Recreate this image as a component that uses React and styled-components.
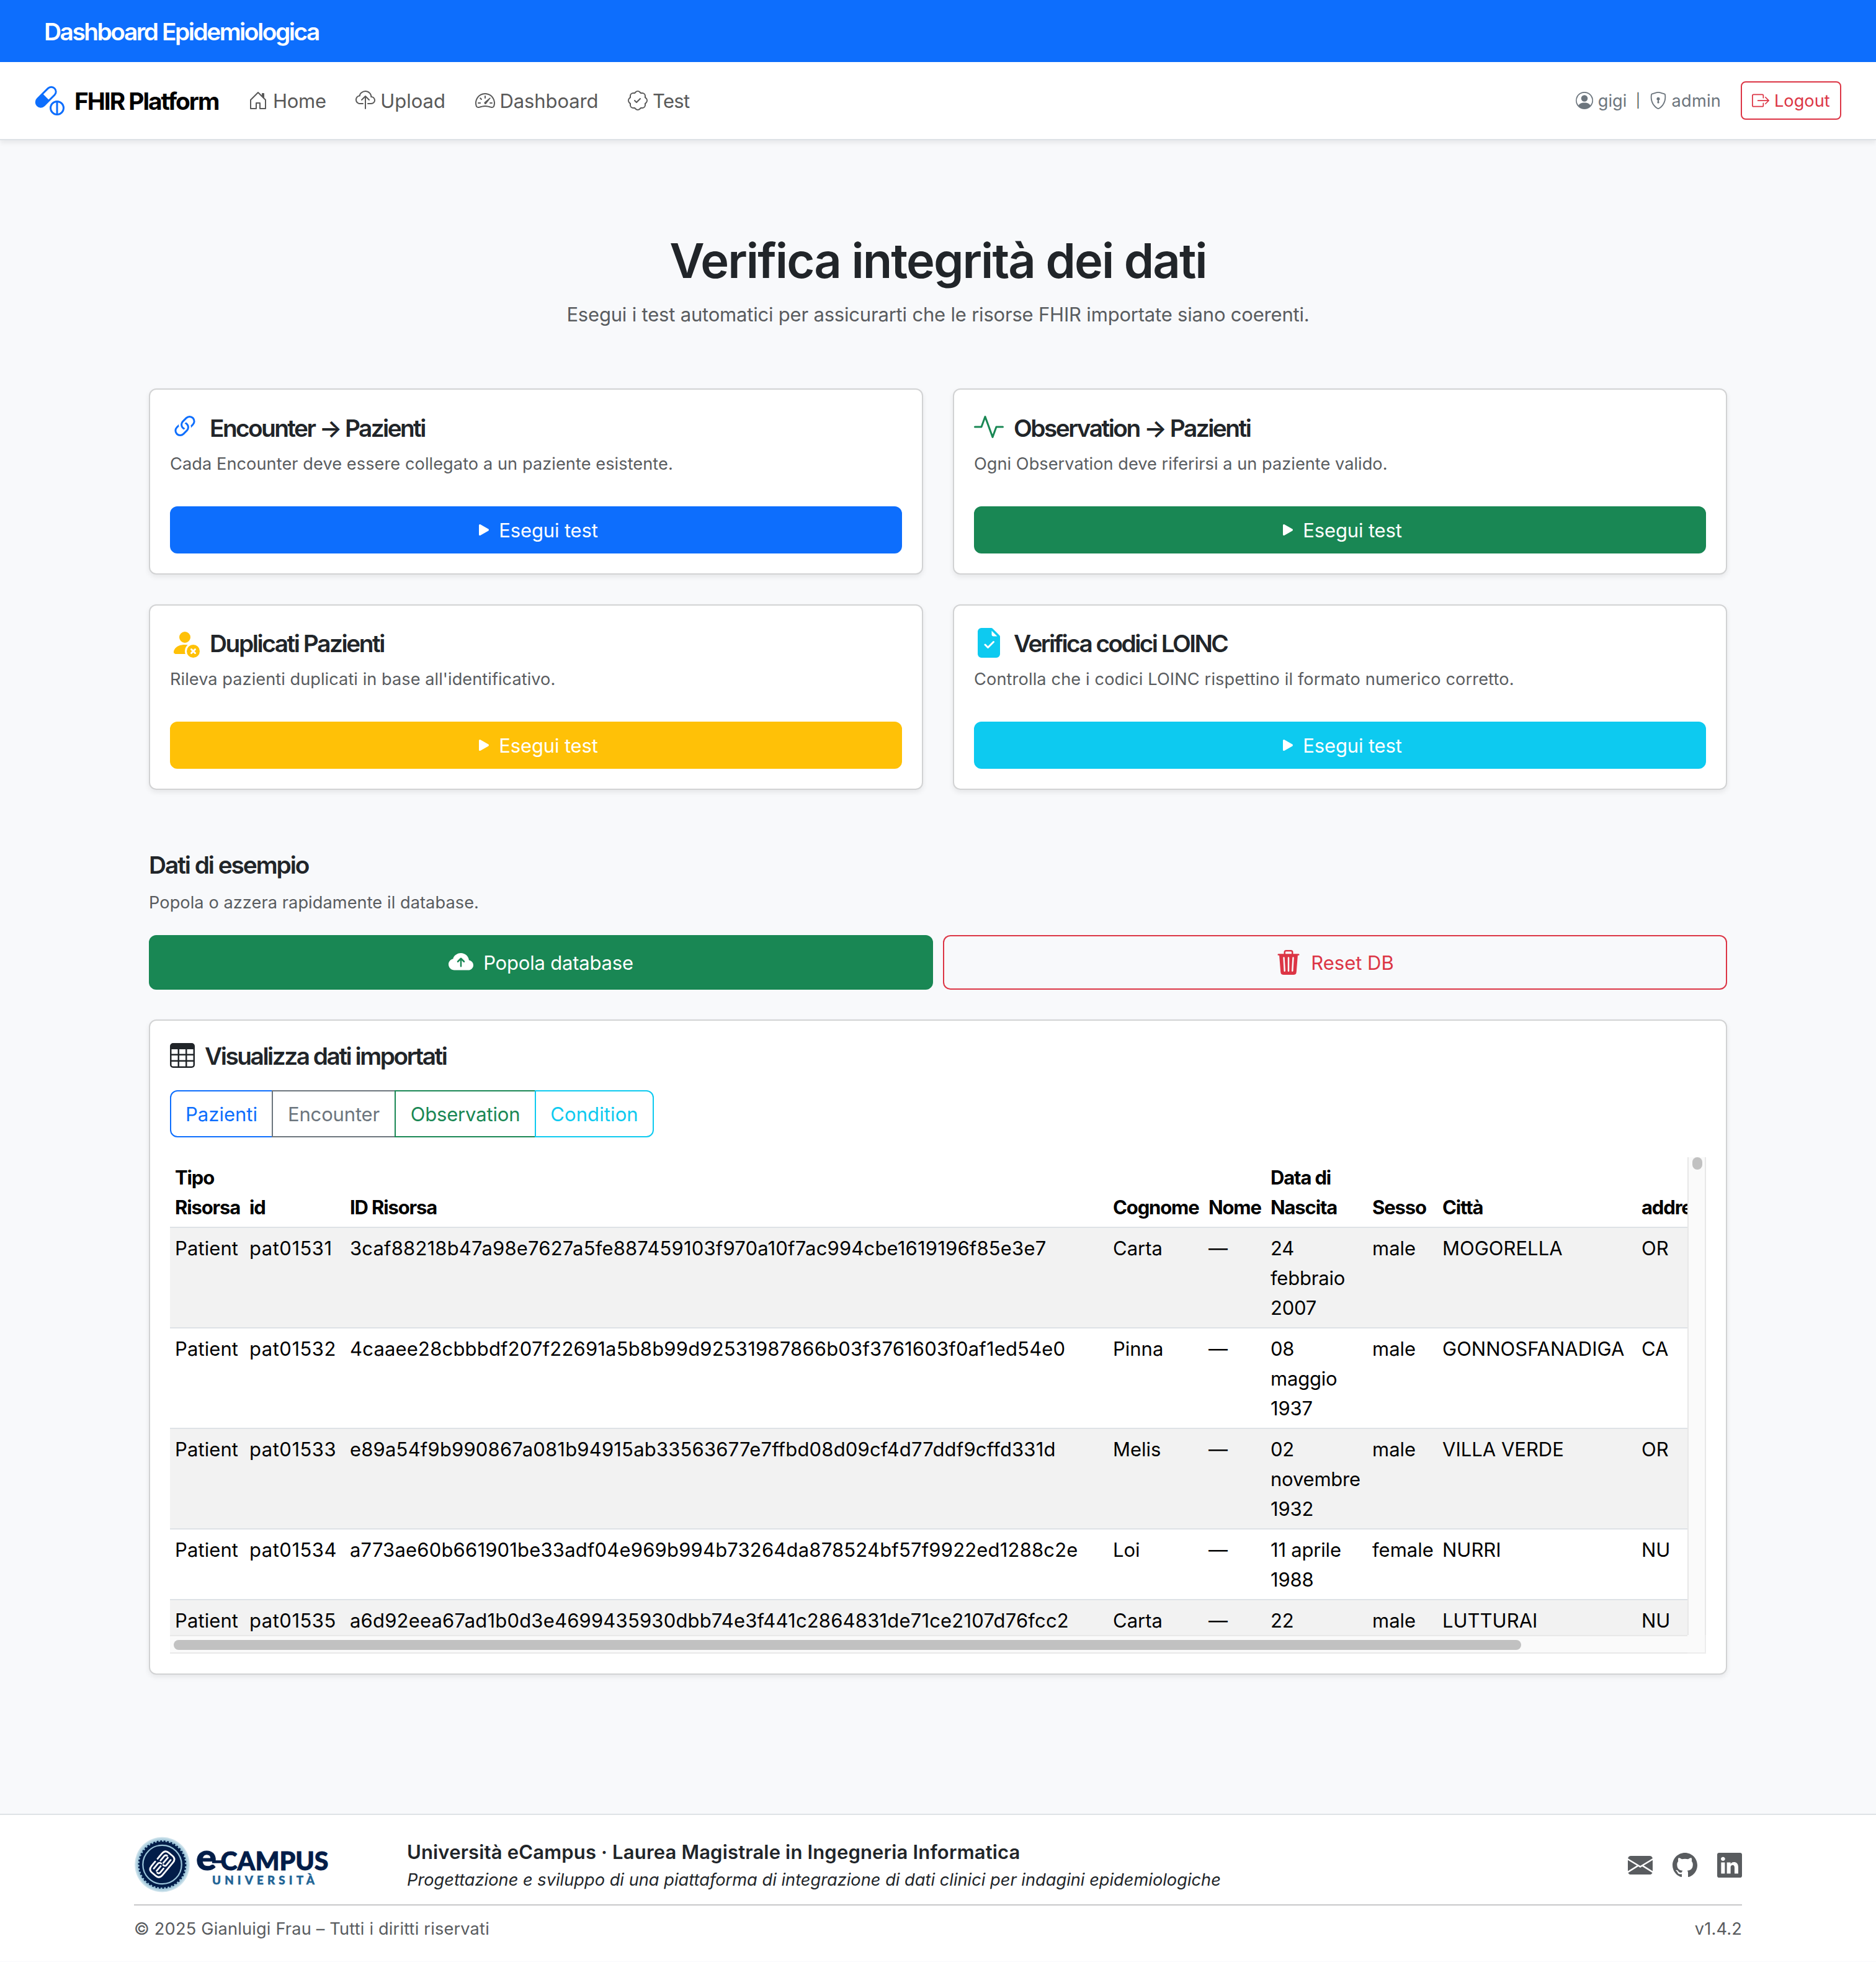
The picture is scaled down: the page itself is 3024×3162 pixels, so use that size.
import React from "react";
import styled, { createGlobalStyle, css } from "styled-components";
import {
  BsActivity,
  BsBoxArrowRight,
  BsCapsulePill,
  BsCloudArrowUpFill,
  BsCloudUpload,
  BsEnvelopeFill,
  BsFileEarmarkCheckFill,
  BsGithub,
  BsHouseDoor,
  BsLink45Deg,
  BsLinkedin,
  BsPatchCheck,
  BsPersonCircle,
  BsPersonFillX,
  BsPlayFill,
  BsShieldLock,
  BsSpeedometer2,
  BsTable,
  BsTrash3Fill,
} from "react-icons/bs";

const color = {
  primary: "#0d6efd",
  success: "#198754",
  warning: "#ffc107",
  info: "#0dcaf0",
  danger: "#dc3545",
  secondary: "#6c757d",
  ink: "#212529",
  muted: "#595c5f",
  line: "#dee2e6",
  page: "#f8f9fb",
};

const GlobalStyle = createGlobalStyle`
  *, *::before, *::after { box-sizing: border-box; }
  body {
    margin: 0;
    background: ${color.page};
    color: ${color.ink};
    font-family: Inter, "Liberation Sans", sans-serif;
    font-size: 31px;
    line-height: 48px;
  }
  svg { display: block; flex: none; }
`;

const tracking = css`
  letter-spacing: ${(p) => p.$track || 0}px;
`;

const Page = styled.div`
  display: flex;
  flex-direction: column;
  min-height: 3162px;
`;

const TopBar = styled.header`
  display: flex;
  align-items: center;
  height: 100px;
  padding: 2px 71px 0;
  background: ${color.primary};
  color: #fff;
  font-size: 38.8px;
  font-weight: 560;
  letter-spacing: -2.45px;
`;

const Navbar = styled.nav`
  display: flex;
  align-items: center;
  height: 126px;
  padding: 0 56px;
  background: #fff;
  border-bottom: 2px solid ${color.line};
  box-shadow: 0 4px 8px rgba(0, 0, 0, 0.075);
`;

const Brand = styled.div`
  display: flex;
  align-items: center;
  gap: 16px;
  width: 344px;
  color: #000;
  font-size: 38.8px;
  font-weight: 700;
  letter-spacing: -2px;
  white-space: nowrap;
  svg { color: ${color.primary}; }
`;

const Label = styled.span`
  padding-top: 1px;
`;

const NavLinks = styled.div`
  display: flex;
  gap: 47.5px;
  flex: 1;
`;

const NavLink = styled.a`
  display: flex;
  align-items: center;
  gap: 8px;
  color: #595959;
  ${tracking}
`;

const UserArea = styled.div`
  display: flex;
  align-items: center;
  gap: 14.5px;
  margin-right: 32px;
  color: #595959;
  font-size: 27.2px;
`;

const Divider = styled.span`
  font-size: 22px;
  padding-bottom: 1px;
`;

const UserInfo = styled.span`
  display: flex;
  align-items: center;
  gap: 8px;
  color: ${color.secondary};
  ${tracking}
`;

const LogoutButton = styled.button`
  display: flex;
  align-items: center;
  gap: 8px;
  height: 62px;
  width: 162px;
  padding: 0 16px;
  border: 2px solid ${color.danger};
  border-radius: 8px;
  background: transparent;
  color: ${color.danger};
  font: inherit;
  font-size: 27.2px;
`;

const Main = styled.main`
  flex: 1;
  width: 2544px;
  margin: 0 auto;
  padding-top: 146px;
`;

const PageTitle = styled.h1`
  margin: 0 0 15px;
  text-align: center;
  font-size: 77.6px;
  font-weight: 640;
  line-height: 96px;
  letter-spacing: -1.95px;
`;

const PageLead = styled.p`
  margin: 0 0 95px;
  text-align: center;
  color: ${color.muted};
  letter-spacing: -0.197px;
`;

const CardGrid = styled.div`
  display: grid;
  grid-template-columns: 1fr 1fr;
  gap: 48px;
`;

const Card = styled.section`
  padding: 32px;
  border: 2px solid #d2d3d4;
  border-radius: 12px;
  background: #fff;
  box-shadow: 0 4px 8px rgba(0, 0, 0, 0.075);
`;

const CardHead = styled.div`
  display: flex;
  align-items: flex-start;
  gap: 16px;
  height: ${(p) => p.$height}px;
  padding-top: 4px;
  margin-bottom: 8px;
  svg { color: ${(p) => p.$tone}; }
`;

const CardTitle = styled.h2`
  margin: ${(p) => p.$top}px 0 0;
  font-size: 38.8px;
  font-weight: 560;
  line-height: 48px;
  white-space: nowrap;
  ${tracking}
`;

const CardText = styled.p`
  margin: 0 0 47px;
  padding-top: 1px;
  color: ${color.muted};
  font-size: 27.2px;
  line-height: 42px;
  ${tracking}
`;

const Button = styled.button`
  display: flex;
  align-items: center;
  justify-content: center;
  gap: ${(p) => (p.$large ? 16 : 8)}px;
  width: 100%;
  height: ${(p) => (p.$large ? 88 : 76)}px;
  padding: 0;
  border: 2px solid ${(p) => p.$tone};
  border-radius: 12px;
  background: ${(p) => (p.$outline ? "transparent" : p.$tone)};
  color: ${(p) => (p.$outline ? p.$tone : "#fff")};
  font: inherit;
  ${tracking}
`;

const SampleTitle = styled.h2`
  margin: 97px 0 15px;
  font-size: 38.8px;
  font-weight: 620;
  line-height: 48px;
  letter-spacing: -2.05px;
`;

const SampleText = styled(CardText)`
  margin-bottom: 31px;
`;

const ButtonRow = styled.div`
  display: grid;
  grid-template-columns: 1fr 1fr;
  gap: 16px;
  margin-bottom: 48px;
`;

const ViewerHead = styled.div`
  display: flex;
  align-items: center;
  gap: 16px;
  height: 48px;
  margin-bottom: 32px;
`;

const Tabs = styled.div`
  display: flex;
  margin-bottom: 32px;
`;

const Tab = styled.button`
  width: ${(p) => p.$width}px;
  height: 76px;
  padding: 1px 0 0;
  border: 2px solid ${(p) => p.$tone};
  background: transparent;
  color: ${(p) => p.$tone};
  font: inherit;
  ${tracking}
  & + & { margin-left: -2px; }
  &:first-child { border-radius: 12px 0 0 12px; }
  &:last-child { border-radius: 0 12px 12px 0; }
`;

const ScrollBox = styled.div`
  display: grid;
  grid-template-columns: 2446px 30px;
  grid-template-rows: 770px 30px;
`;

const Viewport = styled.div`
  overflow: hidden;
`;

const TrackY = styled.div`
  padding-left: 6px;
  border: solid #e8e8e8;
  border-width: 0 2px;
  background: #fafafa;
`;

const TrackX = styled.div`
  padding: 6px 0 0 6px;
  border: solid #e8e8e8;
  border-width: 2px 0;
  background: #fafafa;
`;

const Corner = styled.div`
  border: solid #ededed;
  border-width: 0 2px 2px 0;
  background: #fafafa;
`;

const Thumb = styled.div`
  width: ${(p) => p.$width}px;
  height: ${(p) => p.$height}px;
  border-radius: 8px;
  background: #c1c1c1;
`;

const Table = styled.table`
  width: 2700px;
  table-layout: fixed;
  border-collapse: separate;
  border-spacing: 0;
  color: #000;
`;

const Th = styled.th`
  padding: 9px 8px 7px;
  border-bottom: 2px solid ${color.line};
  text-align: left;
  vertical-align: bottom;
  font-weight: 700;
  letter-spacing: -1.15px;
  white-space: pre;
`;

const Tr = styled.tr`
  &:nth-child(odd) { background: #f2f2f2; }
`;

const Td = styled.td`
  padding: 9px 8px 7px;
  border-bottom: 2px solid ${color.line};
  vertical-align: top;
  white-space: pre;
  ${tracking}
`;

const Footer = styled.footer`
  height: 238px;
  margin-bottom: 1px;
  padding: 36px 216px 0;
  border-top: 2px solid ${color.line};
  background: #fff;
`;

const FooterTop = styled.div`
  display: flex;
  align-items: center;
  height: 90px;
`;

const FooterLogo = styled.div`
  width: 440px;
  height: 92px;
`;

const FooterInfo = styled.div`
  flex: 1;
`;

const Course = styled.div`
  font-weight: 600;
  letter-spacing: 0.16px;
`;

const Thesis = styled.div`
  font-size: 27.2px;
  font-style: italic;
  line-height: 42px;
  letter-spacing: 0.02px;
`;

const Social = styled.div`
  display: flex;
  gap: 32px;
  color: ${color.muted};
`;

const FooterBottom = styled.div`
  display: flex;
  justify-content: space-between;
  margin-top: 18px;
  padding-top: 17px;
  border-top: 2px solid #c7c8c9;
  color: ${color.muted};
  font-size: 27.2px;
  line-height: 42px;
  letter-spacing: 0.18px;
`;

const links = [
  { icon: BsHouseDoor, label: "Home", track: -0.3 },
  { icon: BsCloudUpload, label: "Upload", track: 0 },
  { icon: BsSpeedometer2, label: "Dashboard", track: -0.1 },
  { icon: BsPatchCheck, label: "Test", track: -0.7 },
];

const tests = [
  { icon: BsLink45Deg, tone: color.primary, title: "Encounter → Pazienti", track: -2.6, text: "Cada Encounter deve essere collegato a un paziente esistente.", textTrack: 0.06, height: 58, top: 2 },
  { icon: BsActivity, tone: color.success, title: "Observation → Pazienti", track: -2.5, text: "Ogni Observation deve riferirsi a un paziente valido.", textTrack: 0.02, height: 58, top: 2 },
  { icon: BsPersonFillX, tone: color.warning, title: "Duplicati Pazienti", track: -2.43, text: "Rileva pazienti duplicati in base all'identificativo.", textTrack: 0.04, height: 57, top: 1 },
  { icon: BsFileEarmarkCheckFill, tone: color.info, title: "Verifica codici LOINC", track: -2.55, text: "Controlla che i codici LOINC rispettino il formato numerico corretto.", textTrack: 0.12, height: 57, top: 1 },
];

const tabs = [
  { label: "Pazienti", tone: color.primary, width: 166, track: 0 },
  { label: "Encounter", tone: color.secondary, width: 200, track: -0.17 },
  { label: "Observation", tone: color.success, width: 228, track: -0.16 },
  { label: "Condition", tone: color.info, width: 192, track: 0.1 },
];

const columns = [
  { label: "Tipo\nRisorsa", width: 120, track: 0.1 },
  { label: "id", width: 162, track: 0.5 },
  { label: "ID Risorsa", width: 1230, track: 0.18 },
  { label: "Cognome", width: 154 },
  { label: "Nome", width: 100 },
  { label: "Data di\nNascita", width: 164, track: -0.2 },
  { label: "Sesso", width: 113 },
  { label: "Città", width: 321 },
  { label: "addressState", width: 336 },
];

const rows = [
  ["Patient", "pat01531", "3caf88218b47a98e7627a5fe887459103f970a10f7ac994cbe1619196f85e3e7", "Carta", "—", "24\nfebbraio\n2007", "male", "MOGORELLA", "OR"],
  ["Patient", "pat01532", "4caaee28cbbbdf207f22691a5b8b99d92531987866b03f3761603f0af1ed54e0", "Pinna", "—", "08\nmaggio\n1937", "male", "GONNOSFANADIGA", "CA"],
  ["Patient", "pat01533", "e89a54f9b990867a081b94915ab33563677e7ffbd08d09cf4d77ddf9cffd331d", "Melis", "—", "02\nnovembre\n1932", "male", "VILLA VERDE", "OR"],
  ["Patient", "pat01534", "a773ae60b661901be33adf04e969b994b73264da878524bf57f9922ed1288c2e", "Loi", "—", "11 aprile\n1988", "female", "NURRI", "NU"],
  ["Patient", "pat01535", "a6d92eea67ad1b0d3e4699435930dbb74e3f441c2864831de71ce2107d76fcc2", "Carta", "—", "22", "male", "LUTTURAI", "NU"],
];

function CampusLogo() {
  return (
    <svg width="320" height="92" viewBox="0 0 320 92">
      <defs>
        <radialGradient id="seal" cx="50%" cy="50%" r="50%">
          <stop offset="80%" stopColor="#7fb0cc" />
          <stop offset="94%" stopColor="#b9d6e3" />
          <stop offset="100%" stopColor="#dcebf2" />
        </radialGradient>
      </defs>
      <circle cx="45.5" cy="45" r="44.5" fill="url(#seal)" />
      <circle cx="45.5" cy="45" r="37" fill="#021d49" />
      <circle cx="45.5" cy="45" r="37.6" fill="none" stroke="#021d49" strokeWidth="2.6" strokeDasharray="2.8 2.8" />
      <circle cx="45.5" cy="45" r="31.2" fill="none" stroke="#9cc5da" strokeWidth="2.2" />
      <g transform="translate(45.5 44.5) rotate(40)" fill="none" stroke="#fff" strokeWidth="2.8" strokeLinecap="round">
        <path d="M-11.5 -2 V-13 Q-11.5 -21 -4 -21 H4 Q11.5 -21 11.5 -13 V13 Q11.5 21 4 21 H-4 Q-11.5 21 -11.5 13 V4" />
        <path d="M-6 -3 V-12 Q-6 -15.500 -2.700 -15.500 M0 -14 V-3 M6 -14 V-3 Q6 0 2 0" />
        <path d="M6 4 V12 Q6 15.500 2.700 15.500 M0 14 V4 M-6 14 V4 Q-6 0 -2 0" />
      </g>
      <g fill="#021d49" stroke="#021d49" strokeWidth="0.9" fontFamily="Lato, sans-serif" fontWeight="900">
        <text x="100" y="54.300" fontSize="59" textLength="33" lengthAdjust="spacingAndGlyphs">e</text>
        <rect x="126" y="38.200" width="19" height="4.500" stroke="none" />
        <text x="139.500" y="54" fontSize="42.500" textLength="174" lengthAdjust="spacingAndGlyphs">CAMPUS</text>
      </g>
      <text x="126" y="77.300" fill="#1f6496" stroke="#1f6496" strokeWidth="0.5" fontFamily="Lato, sans-serif" fontWeight="900" fontSize="18.800" textLength="165" lengthAdjust="spacing">UNIVERSITÀ</text>
    </svg>
  );
}

function TestCard({ test }) {
  const Icon = test.icon;
  return (
    <Card>
      <CardHead $tone={test.tone} $height={test.height}>
        <Icon size={48} />
        <CardTitle $track={test.track} $top={test.top}>{test.title}</CardTitle>
      </CardHead>
      <CardText $track={test.textTrack}>{test.text}</CardText>
      <Button $tone={test.tone} $track={-0.14}>
        <BsPlayFill size={32} />
        <Label>Esegui test</Label>
      </Button>
    </Card>
  );
}

export default function App() {
  return (
    <Page>
      <GlobalStyle />
      <TopBar>Dashboard Epidemiologica</TopBar>
      <Navbar>
        <Brand>
          <BsCapsulePill size={48} />
          <Label>FHIR Platform</Label>
        </Brand>
        <NavLinks>
          {links.map(({ icon: Icon, label, track }) => (
            <NavLink key={label} $track={track}>
              <Icon size={32} />
              <Label>{label}</Label>
            </NavLink>
          ))}
        </NavLinks>
        <UserArea>
          <UserInfo>
            <BsPersonCircle size={28} />
            <Label>gigi</Label>
          </UserInfo>
          <Divider>|</Divider>
          <UserInfo $track={0.2}>
            <BsShieldLock size={28} />
            <Label>admin</Label>
          </UserInfo>
        </UserArea>
        <LogoutButton>
          <BsBoxArrowRight size={28} />
          <Label>Logout</Label>
        </LogoutButton>
      </Navbar>

      <Main>
        <PageTitle>Verifica integrità dei dati</PageTitle>
        <PageLead>Esegui i test automatici per assicurarti che le risorse FHIR importate siano coerenti.</PageLead>

        <CardGrid>
          {tests.map((test) => (
            <TestCard key={test.title} test={test} />
          ))}
        </CardGrid>

        <SampleTitle>Dati di esempio</SampleTitle>
        <SampleText $track={0.06}>Popola o azzera rapidamente il database.</SampleText>
        <ButtonRow>
          <Button $large $tone={color.success} $track={-0.2}>
            <BsCloudArrowUpFill size={40} />
            <Label>Popola database</Label>
          </Button>
          <Button $large $outline $tone={color.danger}>
            <BsTrash3Fill size={40} />
            <Label>Reset DB</Label>
          </Button>
        </ButtonRow>

        <Card>
          <ViewerHead>
            <BsTable size={40} />
            <CardTitle $track={-2.47} $top={1}>Visualizza dati importati</CardTitle>
          </ViewerHead>
          <Tabs>
            {tabs.map((tab) => (
              <Tab key={tab.label} $tone={tab.tone} $width={tab.width} $track={tab.track}>
                {tab.label}
              </Tab>
            ))}
          </Tabs>
          <ScrollBox>
            <Viewport>
              <Table>
                <colgroup>
                  {columns.map((c) => (
                    <col key={c.label} width={c.width} />
                  ))}
                </colgroup>
                <thead>
                  <tr>
                    {columns.map((c) => (
                      <Th key={c.label}>{c.label}</Th>
                    ))}
                  </tr>
                </thead>
                <tbody>
                  {rows.map((row) => (
                    <Tr key={row[1]}>
                      {row.map((cell, i) => (
                        <Td key={i} $track={columns[i].track}>{cell}</Td>
                      ))}
                    </Tr>
                  ))}
                </tbody>
              </Table>
            </Viewport>
            <TrackY>
              <Thumb $width={16} $height={20} />
            </TrackY>
            <TrackX>
              <Thumb $width={2172} $height={16} />
            </TrackX>
            <Corner />
          </ScrollBox>
        </Card>
      </Main>

      <Footer>
        <FooterTop>
          <FooterLogo>
            <CampusLogo />
          </FooterLogo>
          <FooterInfo>
            <Course>Università eCampus · Laurea Magistrale in Ingegneria Informatica</Course>
            <Thesis>
              Progettazione e sviluppo di una piattaforma di integrazione di dati clinici per indagini epidemiologiche
            </Thesis>
          </FooterInfo>
          <Social>
            <BsEnvelopeFill size={40} />
            <BsGithub size={40} />
            <BsLinkedin size={40} />
          </Social>
        </FooterTop>
        <FooterBottom>
          <span>© 2025 Gianluigi Frau – Tutti i diritti riservati</span>
          <span>v1.4.2</span>
        </FooterBottom>
      </Footer>
    </Page>
  );
}
